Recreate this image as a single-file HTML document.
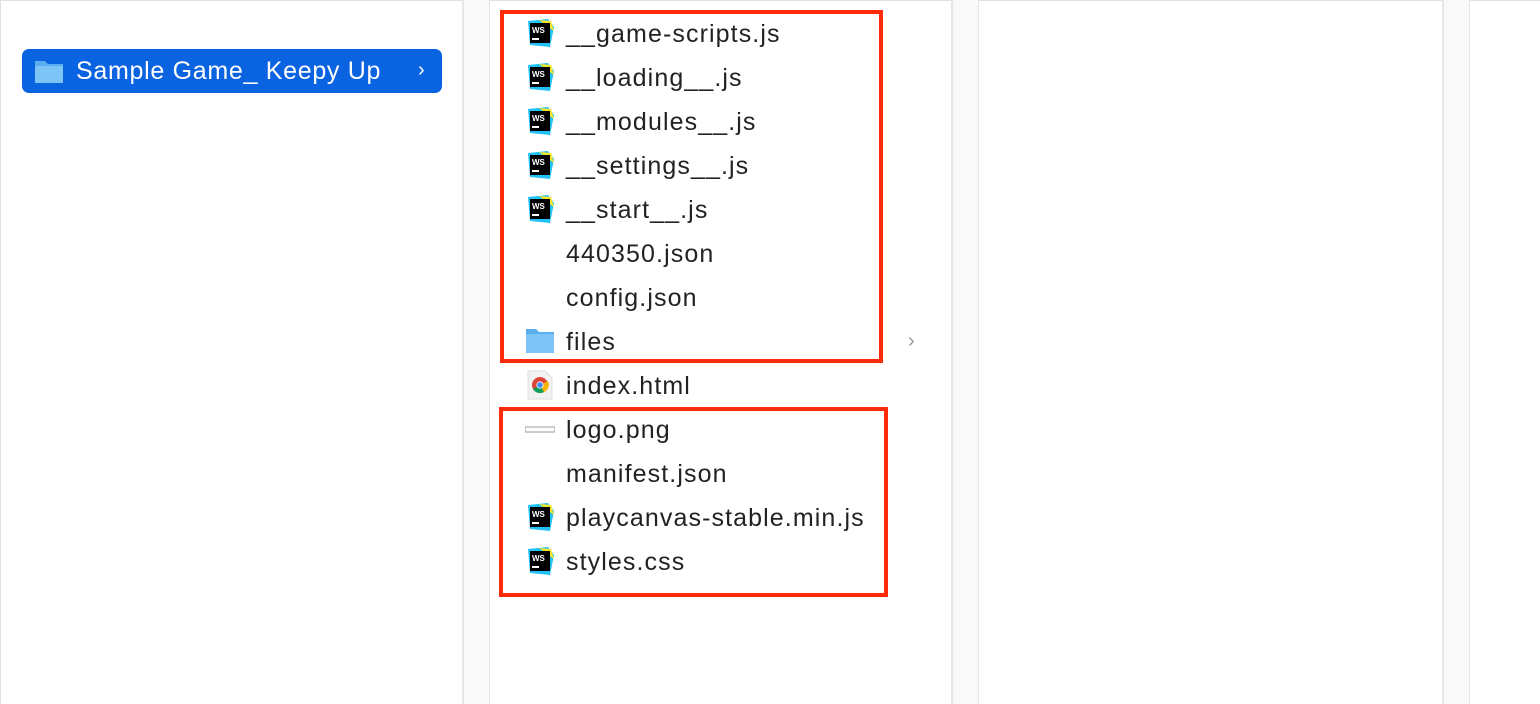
<!DOCTYPE html>
<html><head><style>
body{margin:0;width:1540px;height:704px;position:relative;overflow:hidden;background:#fff;font-family:"Liberation Sans",sans-serif;}
.div{position:absolute;top:0;height:704px;width:25px;background:#f9f9f9;border-left:2px solid #e6e6e6;border-right:1px solid #e6e6e6;}
.row{position:absolute;left:566px;font-size:25px;letter-spacing:1.1px;color:#222;height:44px;line-height:44px;}
.ic{position:absolute;left:525px;width:30px;height:30px;}
.box{position:absolute;border:4px solid #ff2a0a;}
</style></head><body>
<div style="position:absolute;left:0;top:0;width:1540px;height:1px;background:#e0e0e0"></div>
<div style="position:absolute;left:0;top:0;width:1px;height:704px;background:#e0e0e0"></div>
<div class="div" style="left:462px"></div>
<div class="div" style="left:951px"></div>
<div class="div" style="left:1442px"></div>
<div style="position:absolute;left:22px;top:49px;width:420px;height:44px;background:#0a63e0;border-radius:7px;"></div>
<svg style="position:absolute;left:34px;top:57px" width="30" height="28"><path d="M1 4h10l3 3h15v19H1z" fill="#5aaef0"/><rect x="1" y="9" width="28" height="17" rx="2" fill="#7cc3f6"/></svg>
<div style="position:absolute;left:76px;top:49px;line-height:44px;font-size:25px;letter-spacing:0.7px;color:#fff">Sample Game_ Keepy Up</div>
<div style="position:absolute;left:418px;top:49px;line-height:42px;font-size:20px;color:#fff">›</div>

<div class="box" style="left:500px;top:10px;width:375px;height:345px"></div>
<div class="box" style="left:499px;top:407px;width:381px;height:182px"></div>

<svg width="0" height="0" style="position:absolute"><defs><g id="ws"><path d="M3 3l20-2 6 8-4 20-20-2z" fill="#21c0f5"/><path d="M14 2l12 1 3 10z" fill="#f5e52a"/><rect x="5" y="5" width="20" height="20" fill="#000"/><text x="7" y="15" font-size="8" font-weight="bold" fill="#fff" font-family="Liberation Sans">WS</text><rect x="7" y="20" width="7" height="2" fill="#fff"/></g></defs></svg>
<svg class="ic" style="top:18px"><use href="#ws"/></svg>
<svg class="ic" style="top:62px"><use href="#ws"/></svg>
<svg class="ic" style="top:106px"><use href="#ws"/></svg>
<svg class="ic" style="top:150px"><use href="#ws"/></svg>
<svg class="ic" style="top:194px"><use href="#ws"/></svg>
<svg class="ic" style="top:326px"><path d="M1 3h10l3 3h15v21H1z" fill="#5aaef0"/><rect x="1" y="8" width="28" height="19" rx="2" fill="#7cc3f6"/></svg>
<svg class="ic" style="top:370px"><path d="M3 1h17l7 7v21H3z" fill="#f2f2f2" stroke="#ddd"/><circle cx="15" cy="15" r="8" fill="#db4437"/><path d="M15 15L8 19A8 8 0 0 0 19 22z" fill="#0f9d58"/><path d="M15 15l4 7a8 8 0 0 0 4-11z" fill="#f4b400"/><circle cx="15" cy="15" r="3.6" fill="#fff"/><circle cx="15" cy="15" r="2.8" fill="#4285f4"/></svg>
<svg class="ic" style="top:414px"><rect x="0" y="13" width="30" height="5" rx="1" fill="#fff" stroke="#999"/></svg>
<svg class="ic" style="top:502px"><use href="#ws"/></svg>
<svg class="ic" style="top:546px"><use href="#ws"/></svg>

<div class="row" style="top:12px">__game-scripts.js</div>
<div class="row" style="top:56px">__loading__.js</div>
<div class="row" style="top:100px">__modules__.js</div>
<div class="row" style="top:144px">__settings__.js</div>
<div class="row" style="top:188px">__start__.js</div>
<div class="row" style="top:232px">440350.json</div>
<div class="row" style="top:276px">config.json</div>
<div class="row" style="top:320px">files</div>
<div class="row" style="top:364px">index.html</div>
<div class="row" style="top:408px">logo.png</div>
<div class="row" style="top:452px">manifest.json</div>
<div class="row" style="top:496px">playcanvas-stable.min.js</div>
<div class="row" style="top:540px">styles.css</div>
<div style="position:absolute;left:908px;top:320px;line-height:42px;font-size:20px;color:#999">›</div>
</body></html>
